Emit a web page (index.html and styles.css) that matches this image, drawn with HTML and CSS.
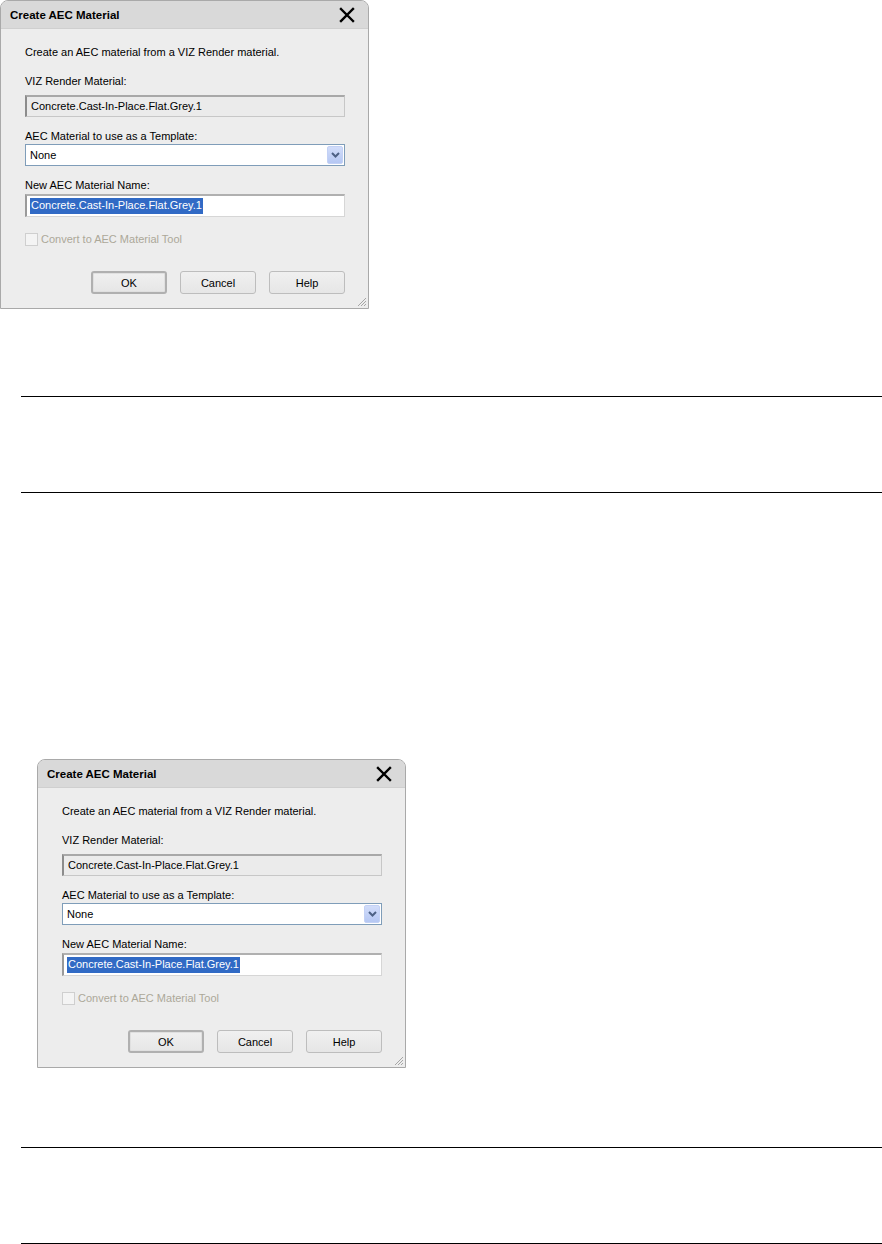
FILE: index.html
```html
<!DOCTYPE html>
<html lang="en">
<head>
    <meta charset="UTF-8">
    <meta name="viewport" content="width=device-width, initial-scale=1.0">
    <title>Create AEC Material</title>
    <link rel="stylesheet" href="styles.css">
</head>
<body>
    <!-- first capture, cropped to the page edge -->
    <div class="shot shot-first">
        <div class="dialog">
            <div class="titlebar">
                <span class="title">Create AEC Material</span>
                <svg class="close" width="16" height="16" viewBox="0 0 16 16">
                    <path d="M2 2 L14 14 M14 2 L2 14" stroke="#000" stroke-width="2.4" stroke-linecap="square"/>
                </svg>
            </div>
            <div class="dialog-body">
                <p class="intro">Create an AEC material from a VIZ Render material.</p>

                <div class="label label-first">VIZ Render Material:</div>
                <div class="readonly">Concrete.Cast-In-Place.Flat.Grey.1</div>

                <div class="label">AEC Material to use as a Template:</div>
                <div class="select">
                    <span>None</span>
                    <span class="drop">
                        <svg width="9" height="6" viewBox="0 0 9 6"><path d="M1 1 L4.5 4.5 L8 1" stroke="#4d6185" stroke-width="2" fill="none"/></svg>
                    </span>
                </div>

                <div class="label">New AEC Material Name:</div>
                <div class="textbox"><span class="selected">Concrete.Cast-In-Place.Flat.Grey.1</span></div>

                <div class="check">
                    <span class="box"></span>
                    <span>Convert to AEC Material Tool</span>
                </div>

                <div class="buttons">
                    <button class="btn btn-default" type="button">OK</button>
                    <button class="btn" type="button">Cancel</button>
                    <button class="btn" type="button">Help</button>
                </div>

                <svg class="grip" width="12" height="12" viewBox="0 0 12 12">
                    <path d="M11 3 L3 11 M11 6 L6 11 M11 9 L9 11" stroke="#a6a6a6" stroke-width="1"/>
                </svg>
            </div>
        </div>
    </div>

    <div class="rule-block"></div>

    <div class="shot shot-second">
        <div class="dialog">
            <div class="titlebar">
                <span class="title">Create AEC Material</span>
                <svg class="close" width="16" height="16" viewBox="0 0 16 16">
                    <path d="M2 2 L14 14 M14 2 L2 14" stroke="#000" stroke-width="2.4" stroke-linecap="square"/>
                </svg>
            </div>
            <div class="dialog-body">
                <p class="intro">Create an AEC material from a VIZ Render material.</p>

                <div class="label label-first">VIZ Render Material:</div>
                <div class="readonly">Concrete.Cast-In-Place.Flat.Grey.1</div>

                <div class="label">AEC Material to use as a Template:</div>
                <div class="select">
                    <span>None</span>
                    <span class="drop">
                        <svg width="9" height="6" viewBox="0 0 9 6"><path d="M1 1 L4.5 4.5 L8 1" stroke="#4d6185" stroke-width="2" fill="none"/></svg>
                    </span>
                </div>

                <div class="label">New AEC Material Name:</div>
                <div class="textbox"><span class="selected">Concrete.Cast-In-Place.Flat.Grey.1</span></div>

                <div class="check">
                    <span class="box"></span>
                    <span>Convert to AEC Material Tool</span>
                </div>

                <div class="buttons">
                    <button class="btn btn-default" type="button">OK</button>
                    <button class="btn" type="button">Cancel</button>
                    <button class="btn" type="button">Help</button>
                </div>

                <svg class="grip" width="12" height="12" viewBox="0 0 12 12">
                    <path d="M11 3 L3 11 M11 6 L6 11 M11 9 L9 11" stroke="#a6a6a6" stroke-width="1"/>
                </svg>
            </div>
        </div>
    </div>

    <div class="rule-block rule-last"></div>
</body>
</html>
```

FILE: styles.css
```css
body {
    margin: 0;
    background: #fff;
    font-family: "Liberation Sans", Arial, sans-serif;
    color: #000;
}

.shot-second {
    margin: 266px 0 0 37px;
}

.dialog {
    width: 367px;
    height: 307px;
    border: 1px solid #a9a9a9;
    border-radius: 8px 8px 0 0;
    background: #ededed;
    display: flex;
    flex-direction: column;
    overflow: hidden;
}

.titlebar {
    height: 27px;
    flex: none;
    display: flex;
    align-items: center;
    justify-content: space-between;
    padding: 0 13px 0 9px;
    background: #d9d9d9;
    border-bottom: 1px solid #cfcfcf;
}

.title {
    font-size: 11.5px;
    font-weight: bold;
}

.dialog-body {
    position: relative;
    flex: 1;
    padding: 0 23px 0 24px;
    font-size: 11px;
    line-height: 13px;
}

.intro {
    margin: 17px 0 0;
}

.label {
    margin-top: 13px;
}

.label-first {
    margin-top: 16px;
}

.readonly {
    margin-top: 7px;
    height: 22px;
    box-sizing: border-box;
    padding: 0 0 0 4px;
    line-height: 19px;
    background: #ebebeb;
    border: 1px solid #c7c7c7;
    border-top: 2px solid #a8a8a8;
    border-left: 2px solid #8c8c8c;
}

.select {
    margin-top: 1px;
    height: 22px;
    box-sizing: border-box;
    display: flex;
    align-items: center;
    justify-content: space-between;
    padding: 0 1px 0 4px;
    background: #fff;
    border: 1px solid #7f9db9;
}

.drop {
    width: 16px;
    height: 18px;
    display: flex;
    align-items: center;
    justify-content: center;
    background: linear-gradient(#d2ddfa, #b5c7f3);
    border: 1px solid #c3d1f5;
    box-sizing: border-box;
    border-radius: 2px;
}

.textbox {
    margin-top: 2px;
    height: 23px;
    box-sizing: border-box;
    display: flex;
    align-items: center;
    padding: 0 0 0 3px;
    background: #fff;
    border: 1px solid #d6d6d6;
    border-top: 2px solid #b0b0b0;
    border-left: 2px solid #9a9a9a;
}

.selected {
    background: #316ac5;
    color: #fff;
    padding: 1px 1px 2px;
}

.check {
    margin-top: 16px;
    display: flex;
    align-items: center;
    gap: 3px;
    color: #aca899;
}

.box {
    width: 11px;
    height: 11px;
    border: 1px solid #cfcfcf;
    background: #f4f4f4;
}

.buttons {
    margin-top: 25px;
    display: flex;
    justify-content: flex-end;
    gap: 13px;
}

.btn {
    width: 76px;
    height: 23px;
    box-sizing: border-box;
    font-family: inherit;
    font-size: 11px;
    color: #000;
    background: linear-gradient(#f0f0f0, #e6e6e6);
    border: 1px solid #bdbdbd;
    border-radius: 3px;
    padding: 0;
}

.btn-default {
    border: 2px solid #b0b0b0;
    box-shadow: inset 0 0 0 1px #e0e0e0;
}

.grip {
    position: absolute;
    right: 1px;
    bottom: 1px;
}

.rule-block {
    margin: 87px 0 0 21px;
    height: 95px;
    border-top: 1px solid #000;
    border-bottom: 1px solid #000;
}

.rule-last {
    margin-top: 79px;
}
```
